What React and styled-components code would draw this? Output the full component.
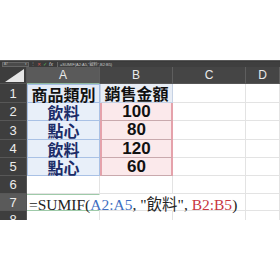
import React from "react";
import styled, { createGlobalStyle } from "styled-components";

const GlobalStyle = createGlobalStyle`
  html, body {
    margin: 0;
    padding: 0;
    background: #ffffff;
  }
`;

const Page = styled.div`
  width: 280px;
  height: 280px;
  padding-top: 60px;
  box-sizing: border-box;
  overflow: hidden;
  background: #fff;
  font-family: "Liberation Sans", Arial, sans-serif;
`;

const FormulaBar = styled.div`
  height: 7px;
  background: #3a3a3a;
  border-top: 1px solid #5a5a5a;
  display: flex;
  align-items: center;
  gap: 2px;
  padding-left: 2px;
  box-sizing: border-box;
`;

const NameBox = styled.div`
  width: 27px;
  height: 5px;
  background: #4a4a4a;
  border: 1px solid #666;
  box-sizing: border-box;
  display: flex;
  align-items: center;
  justify-content: space-between;
  padding: 0 1px;
  font-size: 3px;
  color: #bbb;
`;

const Tiny = styled.span`
  font-size: ${p => p.$size || 4}px;
  line-height: 1;
  color: ${p => p.$color || "#bbb"};
  font-style: ${p => (p.$italic ? "italic" : "normal")};
`;

const FormulaInput = styled.div`
  flex: 1;
  height: 5px;
  margin-left: 2px;
  background: #3f3f3f;
  border-left: 1px solid #666;
  display: flex;
  align-items: center;
  padding-left: 2px;
  font-size: 4px;
  color: #c8c8c8;
  white-space: nowrap;
  font-family: "Liberation Sans", "Noto Sans CJK TC", sans-serif;
`;

const Sheet = styled.div`
  display: grid;
  grid-template-columns: 27px 73px 73px 73px 1fr;
  grid-template-rows: 17px 19px 18px 19px 18px 18px 18px 17px 18px;
  height: 153px;
  overflow: hidden;
  background: #fff;
`;

const Corner = styled.div`
  background: #3d3d3d;
  border-right: 1px solid #555;
  border-bottom: 1px solid #555;
  position: relative;
  &::after {
    content: "";
    position: absolute;
    right: 2px;
    bottom: 1px;
    width: 0;
    height: 0;
    border-left: 19px solid transparent;
    border-bottom: 13px solid #e6e6e6;
  }
`;

const ColHeader = styled.div`
  background: ${p => (p.$selected ? "#5a5a5a" : "#454545")};
  border-right: 1px solid #5e5e5e;
  border-bottom: 1px solid ${p => (p.$selected ? "#8fb89c" : "#555")};
  color: #eaeaea;
  font-size: 12px;
  display: flex;
  align-items: center;
  justify-content: center;
  overflow: hidden;
`;

const RowHeader = styled.div`
  background: ${p => (p.$selected ? "#5a5a5a" : "#3e3e3e")};
  border-right: 1px solid #555;
  border-bottom: 1px solid #575757;
  color: #ececec;
  font-size: 13px;
  display: flex;
  align-items: center;
  justify-content: center;
`;

const variants = {
  catHead: { bg: "#e4ebf6", border: "#a4bde3", color: "#111" },
  cat: { bg: "#e8eff9", border: "#a9c1e5", color: "#1b2c68" },
  amtHead: { bg: "#e8edf5", border: "#c6d2e4", color: "#111" },
  amt: { bg: "#fbe9eb", border: "#e5a2ab", color: "#111" },
};

const Cell = styled.div`
  position: relative;
  box-sizing: border-box;
  background: ${p => (p.$v ? variants[p.$v].bg : "#fff")};
  border-right: 1px solid ${p => (p.$noRight ? "transparent" : "#e3e3e3")};
  border-bottom: 1px solid #e3e3e3;
  ${p =>
    p.$v &&
    `
    border: 1px solid ${variants[p.$v].border};
    border-top: none;
  `}
  ${p => p.$v === "amt" && `border-left-width: 2px; border-right-width: 2px; border-bottom-color: #c9a9ad;`}
  ${p => p.$v === "catHead" && `border-top: 1px solid #a4bde3;`}
  color: ${p => (p.$v ? variants[p.$v].color : "#111")};
  font-family: "Liberation Sans", "Noto Sans CJK TC", sans-serif;
  font-weight: 700;
  font-size: ${p => (p.$num ? 17 : 16)}px;
  display: flex;
  align-items: center;
  justify-content: center;
  white-space: nowrap;
  overflow: visible;
`;

const ActiveCell = styled.div`
  position: relative;
  border-top: 1px solid #9fcaa9;
  border-bottom: 1px solid #9fcaa9;
  border-right: 1px solid transparent;
  box-sizing: border-box;
  display: flex;
  align-items: center;
  overflow: visible;
`;

const FormulaText = styled.span`
  position: absolute;
  left: 2px;
  top: 50%;
  transform: translateY(-50%);
  z-index: 2;
  white-space: nowrap;
  font-family: "Liberation Serif", "Noto Sans CJK TC", serif;
  font-size: 15.5px;
  color: #222;
`;

const Ref = styled.span`
  color: ${p => p.$color};
`;

const data = [
  ["飲料", "100"],
  ["點心", "80"],
  ["飲料", "120"],
  ["點心", "60"],
];

export default function App() {
  return (
    <Page>
      <GlobalStyle />
      <FormulaBar>
        <NameBox>
          <span>A7</span>
          <span>▾</span>
        </NameBox>
        <Tiny $size={4} $color="#888">⋮</Tiny>
        <Tiny $size={5} $color="#d9534f">✕</Tiny>
        <Tiny $size={5} $color="#5cb85c">✓</Tiny>
        <Tiny $size={5} $color="#ccc" $italic>fx</Tiny>
        <FormulaInput>=SUMIF(A2:A5,"飲料",B2:B5)</FormulaInput>
      </FormulaBar>
      <Sheet>
        <Corner />
        <ColHeader $selected>A</ColHeader>
        <ColHeader>B</ColHeader>
        <ColHeader>C</ColHeader>
        <ColHeader>D</ColHeader>

        <RowHeader>1</RowHeader>
        <Cell $v="catHead">商品類別</Cell>
        <Cell $v="amtHead">銷售金額</Cell>
        <Cell />
        <Cell />

        {data.map(([cat, amt], i) => (
          <React.Fragment key={i}>
            <RowHeader>{i + 2}</RowHeader>
            <Cell $v="cat">{cat}</Cell>
            <Cell $v="amt" $num>{amt}</Cell>
            <Cell />
            <Cell />
          </React.Fragment>
        ))}

        <RowHeader>6</RowHeader>
        <Cell />
        <Cell />
        <Cell />
        <Cell />

        <RowHeader $selected>7</RowHeader>
        <ActiveCell>
          <FormulaText>
            =SUMIF(<Ref $color="#3f6fc2">A2:A5</Ref>, "飲料",{" "}
            <Ref $color="#c9363f">B2:B5</Ref>)
          </FormulaText>
        </ActiveCell>
        <Cell $noRight />
        <Cell />
        <Cell />

        <RowHeader>8</RowHeader>
        <Cell />
        <Cell />
        <Cell />
        <Cell />
      </Sheet>
    </Page>
  );
}
